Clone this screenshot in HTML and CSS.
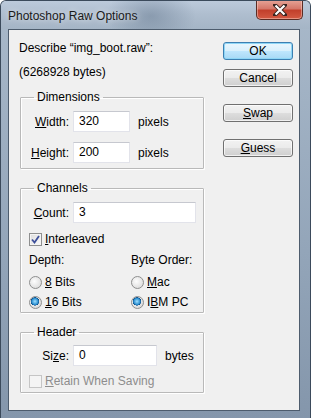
FILE: index.html
```html
<!DOCTYPE html>
<html lang="en">
<head>
  <meta charset="UTF-8" />
  <meta name="viewport" content="width=device-width, initial-scale=1" />
  <title>Photoshop Raw Options</title>
  <link rel="stylesheet" href="styles.css">
</head>
<body>
  <div class="window">
    <div class="titlebar">
      <span class="title">Photoshop Raw Options</span>
      <button class="close" aria-label="Close">
        <svg width="14" height="12" viewBox="0 0 14 12">
          <path d="M2 1 L12 11 M12 1 L2 11" stroke="#3a2520" stroke-width="4" stroke-linecap="square" />
          <path d="M2.5 1.5 L11.5 10.5 M11.5 1.5 L2.5 10.5" stroke="#fff" stroke-width="2.2" />
        </svg>
      </button>
    </div>

    <div class="client">
      <div class="main">
        <p class="line">Describe “img_boot.raw”:</p>
        <p class="line second">(6268928 bytes)</p>

        <!-- Dimensions -->
        <fieldset class="group dims">
          <legend>Dimensions</legend>
          <div class="field-row">
            <label class="lbl"><u>W</u>idth:</label>
            <div class="textbox w-small">320</div>
            <span class="unit">pixels</span>
          </div>
          <div class="field-row">
            <label class="lbl"><u>H</u>eight:</label>
            <div class="textbox w-small">200</div>
            <span class="unit">pixels</span>
          </div>
        </fieldset>

        <!-- Channels -->
        <fieldset class="group channels">
          <legend>Channels</legend>
          <div class="field-row">
            <label class="lbl"><u>C</u>ount:</label>
            <div class="textbox w-wide">3</div>
          </div>
          <div class="check-row">
            <span class="checkbox checked">
              <svg width="9" height="9" viewBox="0 0 9 9">
                <path d="M1 4.5 L3.5 7.5 L8 1" fill="none" stroke="#3d4f9a" stroke-width="1.8" />
              </svg>
            </span>
            <span><u>I</u>nterleaved</span>
          </div>
          <div class="options">
            <div class="opt-col">
              <span class="opt-title">Depth:</span>
              <div class="radio-row"><span class="radio"></span><span><u>8</u> Bits</span></div>
              <div class="radio-row"><span class="radio on"></span><span><u>1</u>6 Bits</span></div>
            </div>
            <div class="opt-col">
              <span class="opt-title">Byte Order:</span>
              <div class="radio-row"><span class="radio"></span><span><u>M</u>ac</span></div>
              <div class="radio-row"><span class="radio on"></span><span>I<u>B</u>M PC</span></div>
            </div>
          </div>
        </fieldset>

        <!-- Header -->
        <fieldset class="group header">
          <legend>Header</legend>
          <div class="field-row">
            <label class="lbl">Si<u>z</u>e:</label>
            <div class="textbox w-mid">0</div>
            <span class="unit">bytes</span>
          </div>
          <div class="check-row disabled">
            <span class="checkbox"></span>
            <span><u>R</u>etain When Saving</span>
          </div>
        </fieldset>
      </div>

      <div class="actions">
        <button class="btn default">OK</button>
        <button class="btn">Cancel</button>
        <button class="btn spaced"><u>S</u>wap</button>
        <button class="btn spaced"><u>G</u>uess</button>
      </div>
    </div>
  </div>
</body>
</html>
```

FILE: styles.css
```css
:root {
  --face: #f0f0f0;
  --frame: #8d9fb3;
  --text: #000;
  --group-line: #b9b9b9;
}

* {
  box-sizing: border-box;
}

body {
  margin: 0;
  background: #fff;
  font-family: 'Liberation Sans', Arial, sans-serif;
  font-size: 12px;
  color: var(--text);
}

.window {
  width: 311px;
  height: 418px;
  display: flex;
  flex-direction: column;
  padding: 0 10px 7px 7px;
  background: linear-gradient(to bottom, #a9b9ca 0%, #93a5b9 60%, #8496ab 100%);
  border: 1px solid #3b4a5b;
  border-bottom: none;
  border-radius: 6px 6px 0 0;
  overflow: hidden;
}

/* Title bar */
.titlebar {
  height: 28px;
  display: flex;
  align-items: flex-start;
  justify-content: space-between;
  margin: 0 -10px 0 -7px;
  padding-left: 7px;
  background:
    radial-gradient(ellipse 45px 30px at 150px 15px, rgba(95, 115, 138, 0.45), transparent),
    linear-gradient(to bottom, #bccadb 0%, #aebdce 50%, #a5b5c6 100%);
}

.title {
  margin-top: 8px;
  font-size: 12px;
  color: #1a1a1a;
  text-shadow: 0 0 6px rgba(255, 255, 255, 0.8);
}

.close {
  width: 47px;
  height: 20px;
  margin: -1px 7px 0 0;
  padding: 0;
  display: flex;
  align-items: center;
  justify-content: center;
  border: 1px solid #5a2c24;
  border-top: none;
  border-radius: 0 0 5px 5px;
  background: linear-gradient(to bottom, #e7a598 0%, #d5786a 45%, #c2402c 55%, #d35a43 100%);
  box-shadow: inset 0 0 0 1px rgba(255, 220, 210, 0.45);
}

/* Client area */
.client {
  flex: 1;
  display: flex;
  background: var(--face);
  border: 1px solid #4d5c6d;
}

.main {
  width: 195px;
  padding: 11px 0 0 10px;
}

.line {
  margin: 0;
  line-height: 15px;
}

.line.second {
  margin-top: 9px;
}

/* Group boxes */
.group {
  margin: 10px 0 0 1px;
  width: 184px;
  padding: 7px 6px 5px 8px;
  border: 1px solid var(--group-line);
  border-radius: 1px;
  box-shadow: inset 1px 1px 0 #fff, 1px 1px 0 #fff;
  min-inline-size: 0;
}

.group legend {
  margin-left: 5px;
  padding: 0 3px;
  line-height: 14px;
}

.channels,
.header {
  margin-top: 12px;
}

.channels {
  padding-bottom: 3px;
}

.header {
  padding-top: 6px;
  padding-bottom: 4px;
}

.field-row {
  display: flex;
  align-items: center;
  height: 21px;
}

.field-row + .field-row {
  margin-top: 10px;
}

.lbl {
  width: 40px;
  text-align: right;
  margin-right: 4px;
}

.textbox {
  height: 21px;
  line-height: 19px;
  padding-left: 5px;
  background: #fff;
  border: 1px solid #e2e3ea;
  border-top-color: #c6c8cf;
}

.w-small { width: 57px; }
.w-wide { width: 123px; }
.w-mid { width: 84px; }

.unit {
  margin-left: 8px;
}

/* Checkboxes */
.check-row {
  display: flex;
  align-items: center;
  gap: 3px;
  margin-top: 9px;
  height: 14px;
}

.checkbox {
  width: 13px;
  height: 13px;
  display: flex;
  align-items: center;
  justify-content: center;
  border: 1px solid #8e8f8f;
  background: linear-gradient(135deg, #dcdcdc, #fbfbfb);
  box-shadow: inset 0 0 0 1px #f4f4f4;
}

.check-row.disabled {
  color: #8d8d8d;
  margin-top: 8px;
}

.check-row.disabled .checkbox {
  border-color: #c5c5c5;
  background: #f4f4f4;
}

/* Radio options */
.options {
  display: flex;
  margin-top: 7px;
}

.opt-col {
  display: flex;
  flex-direction: column;
}

.opt-col:first-child {
  width: 102px;
}

.opt-title {
  line-height: 15px;
}

.radio-row {
  display: flex;
  align-items: center;
  gap: 3px;
  height: 14px;
  margin-top: 7px;
}

.radio-row + .radio-row {
  margin-top: 6px;
}

.radio {
  width: 13px;
  height: 13px;
  border-radius: 50%;
  border: 1px solid #8e8f8f;
  background: radial-gradient(circle at 40% 40%, #fdfdfd 0%, #dcdcdc 80%);
}

.radio.on {
  background:
    radial-gradient(circle at 45% 40%, #9fe0ff 0%, #2d8fd0 35%, #0b4f8a 45%, transparent 48%),
    radial-gradient(circle at 40% 40%, #fdfdfd 0%, #d8d8d8 80%);
}

/* Buttons */
.actions {
  display: flex;
  flex-direction: column;
  padding-top: 12px;
  margin-left: 19px;
}

.btn {
  width: 70px;
  height: 18px;
  padding: 0;
  font-family: inherit;
  font-size: 12px;
  line-height: 14px;
  color: #000;
  border: 1px solid #707070;
  border-radius: 3px;
  background: linear-gradient(to bottom, #f2f2f2 0%, #ebebeb 48%, #dddddd 52%, #cfcfcf 100%);
  box-shadow: inset 0 0 0 1px rgba(255, 255, 255, 0.7);
}

.btn + .btn {
  margin-top: 9px;
}

.btn.spaced {
  margin-top: 17px;
}

.btn.default {
  border-color: #3c7fb1;
  background: linear-gradient(to bottom, #eaf6fd 0%, #d9f0fc 48%, #bee6fd 52%, #a7d9f5 100%);
  box-shadow: inset 0 0 0 1px #8ed6f6;
}
```
